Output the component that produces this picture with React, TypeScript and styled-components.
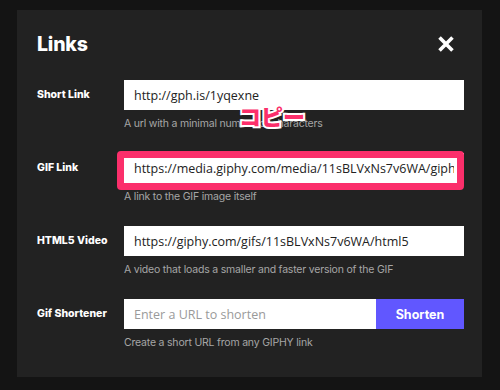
import styled, { createGlobalStyle } from 'styled-components';

const GlobalStyle = createGlobalStyle`
  html, body {
    margin: 0;
    padding: 0;
    background: #141414;
  }
  * {
    box-sizing: border-box;
  }
`;

const Page = styled.div`
  width: 500px;
  height: 390px;
  padding: 10px 18px 13px 17px;
  background: #141414;
  font-family: Inter, "Noto Sans", sans-serif;
`;

const Modal = styled.section`
  position: relative;
  height: 100%;
  background: #222222;
  padding: 19px 18px 25px 20px;
`;

const Header = styled.header`
  display: flex;
  justify-content: space-between;
  align-items: center;
  height: 30px;
  margin-bottom: 21px;
`;

const Title = styled.h1`
  margin: 0;
  font-size: 19.5px;
  line-height: 30px;
  font-weight: 800;
  color: #fff;
  letter-spacing: -0.2px;
`;

const CloseButton = styled.button`
  display: flex;
  align-items: center;
  justify-content: center;
  width: 20px;
  height: 20px;
  margin-right: 8px;
  padding: 0;
  border: none;
  background: none;
  cursor: pointer;
`;

const Rows = styled.div`
  display: flex;
  flex-direction: column;
  gap: 22px;
`;

const Row = styled.div`
  display: grid;
  grid-template-columns: 87px 1fr;
`;

const Label = styled.label`
  font-size: 10.5px;
  line-height: 30px;
  font-weight: 800;
  color: #fff;
`;

const Field = styled.div`
  display: flex;
  flex-direction: column;
  gap: 7px;
`;

const InputWrap = styled.div<{ $highlight?: boolean }>`
  position: relative;
  display: flex;
  height: 30px;

  ${({ $highlight }) =>
    $highlight &&
    `
    &::after {
      content: '';
      position: absolute;
      top: -2px;
      left: -7px;
      right: 0;
      bottom: -7px;
      border: 7px solid #fb2f6b;
      border-radius: 4px;
      pointer-events: none;
    }
  `}
`;

const Input = styled.input`
  flex: 1;
  min-width: 0;
  height: 30px;
  padding: 0 10px;
  border: none;
  outline: none;
  background: #fff;
  color: #222;
  font-family: "Open Sans", "Noto Sans", sans-serif;
  font-size: 12.5px;

  &::placeholder {
    color: #9a9a9a;
  }
`;

const ShortenButton = styled.button`
  width: 88px;
  height: 30px;
  border: none;
  background: #6157ff;
  color: #fff;
  font-family: Inter, "Noto Sans", sans-serif;
  font-size: 12.5px;
  font-weight: 700;
  cursor: pointer;
`;

const Help = styled.p`
  margin: 0;
  font-size: 10.5px;
  line-height: 14px;
  letter-spacing: -0.2px;
  color: #a6a6a6;
`;

const Note = styled.span`
  position: absolute;
  left: 222px;
  top: 93px;
  font-family: "Noto Sans CJK JP", sans-serif;
  font-size: 22px;
  font-weight: 900;
  line-height: 24px;
  color: #fb2f6b;
  -webkit-text-stroke: 4px #fff;
  paint-order: stroke fill;
`;

const links = [
  {
    label: 'Short Link',
    value: 'http://gph.is/1yqexne',
    help: 'A url with a minimal number of characters',
  },
  {
    label: 'GIF Link',
    value: 'https://media.giphy.com/media/11sBLVxNs7v6WA/giphy.gif',
    help: 'A link to the GIF image itself',
    highlight: true,
  },
  {
    label: 'HTML5 Video',
    value: 'https://giphy.com/gifs/11sBLVxNs7v6WA/html5',
    help: 'A video that loads a smaller and faster version of the GIF',
  },
];

const App = () => {
  return (
    <>
      <GlobalStyle />
      <Page>
        <Modal>
          <Header>
            <Title>Links</Title>
            <CloseButton aria-label="Close">
              <svg width="16" height="16" viewBox="0 0 16 16">
                <path
                  d="M2.8 2.8 L13.2 13.2 M13.2 2.8 L2.8 13.2"
                  stroke="#fff"
                  strokeWidth="3.6"
                  strokeLinecap="square"
                />
              </svg>
            </CloseButton>
          </Header>
          <Rows>
            {links.map((link) => (
              <Row key={link.label}>
                <Label>{link.label}</Label>
                <Field>
                  <InputWrap $highlight={link.highlight}>
                    <Input readOnly value={link.value} />
                  </InputWrap>
                  <Help>{link.help}</Help>
                </Field>
              </Row>
            ))}
            <Row>
              <Label>Gif Shortener</Label>
              <Field>
                <InputWrap>
                  <Input placeholder="Enter a URL to shorten" />
                  <ShortenButton>Shorten</ShortenButton>
                </InputWrap>
                <Help>Create a short URL from any GIPHY link</Help>
              </Field>
            </Row>
          </Rows>
          <Note>コピー</Note>
        </Modal>
      </Page>
    </>
  );
};

export default App;
